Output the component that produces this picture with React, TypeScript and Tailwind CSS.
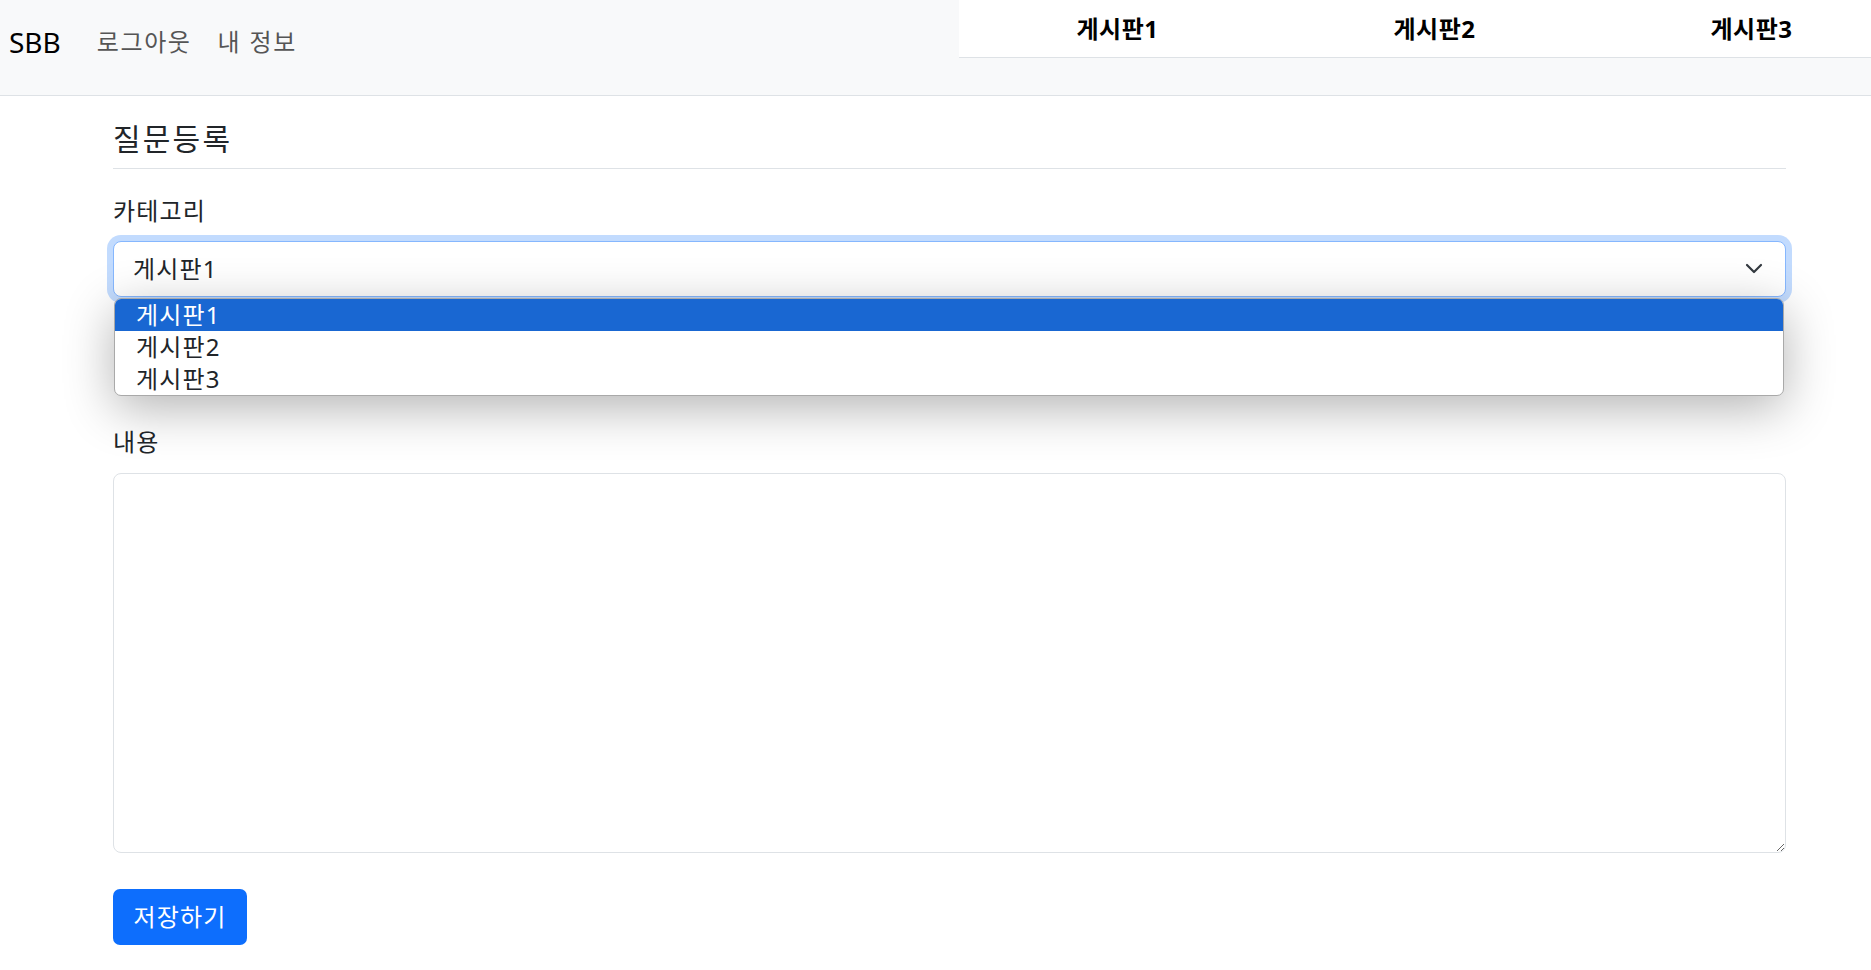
import React from 'react';

const boards = ['게시판1', '게시판2', '게시판3'];

export default function App() {
  return (
    <div className="min-h-[970px] w-[1871px] bg-white text-[#212529] font-['Noto_Sans','Noto_Sans_CJK_KR',sans-serif] overflow-hidden">
      {/* Navbar */}
      <header className="h-[96px] bg-[#f8f9fa] border-b border-[#dee2e6] flex items-start">
        <div className="flex items-center h-[84px] pl-[9px]">
          <span className="text-[28px] leading-[42px] text-black">SBB</span>
          <a className="ml-[36px] text-[24px] leading-[36px] tracking-[1.6px] text-[#555555]">로그아웃</a>
          <a className="ml-[26px] text-[24px] leading-[36px] tracking-[1.8px] text-[#555555]">내 정보</a>
        </div>
        <nav className="ml-auto w-[912px] h-[58px] bg-white border-b border-[#dee2e6] flex overflow-hidden">
          {boards.map((b) => (
            <div key={b} className="w-[317px] shrink-0 flex items-center justify-center text-[24px] tracking-[0.5px] font-bold text-black">
              {b}
            </div>
          ))}
        </nav>
      </header>

      {/* Form */}
      <main className="ml-[113px] w-[1673px] tracking-[1.2px]">
        <h5 className="mt-[20px] pb-[7px] border-b border-[#dee2e6] text-[30px] leading-[45px] tracking-[2.2px]">질문등록</h5>

        <label className="block mt-[24px] text-[24px] leading-[36px]">카테고리</label>
        <div className="relative mt-[12px]">
          <div className="h-[56px] rounded-[8px] border border-[#86b7fe] shadow-[0_0_0_6px_#c2dbfe] bg-white flex items-center pl-[19px] pr-[22px] text-[24px]">
            <span>게시판1</span>
            <svg className="ml-auto" width="18" height="12" viewBox="0 0 18 12" fill="none">
              <polyline points="2,2 9,9 16,2" stroke="#343a40" strokeWidth="2.2" strokeLinecap="round" strokeLinejoin="round" />
            </svg>
          </div>
          <ul className="absolute z-10 top-[57px] left-[1px] right-[2px] bg-white border border-[#a9a9a9] rounded-[7px] overflow-hidden shadow-[0_12px_50px_rgba(0,0,0,0.3)] text-[24px]">
            {boards.map((b, i) => (
              <li
                key={b}
                className={`h-[32px] leading-[32px] pl-[21px] ${i === 0 ? 'bg-[#1967d2] text-white' : 'text-[#212529]'}`}
              >
                {b}
              </li>
            ))}
          </ul>
        </div>

        <label className="block mt-[127px] text-[24px] leading-[36px]">내용</label>
        <textarea className="block mt-[13px] w-full h-[380px] rounded-[8px] border border-[#dee2e6] resize-y outline-none" />

        <button className="mt-[36px] h-[56px] w-[134px] rounded-[7px] bg-[#0d6efd] text-white text-[24px]">
          저장하기
        </button>
      </main>
    </div>
  );
}
